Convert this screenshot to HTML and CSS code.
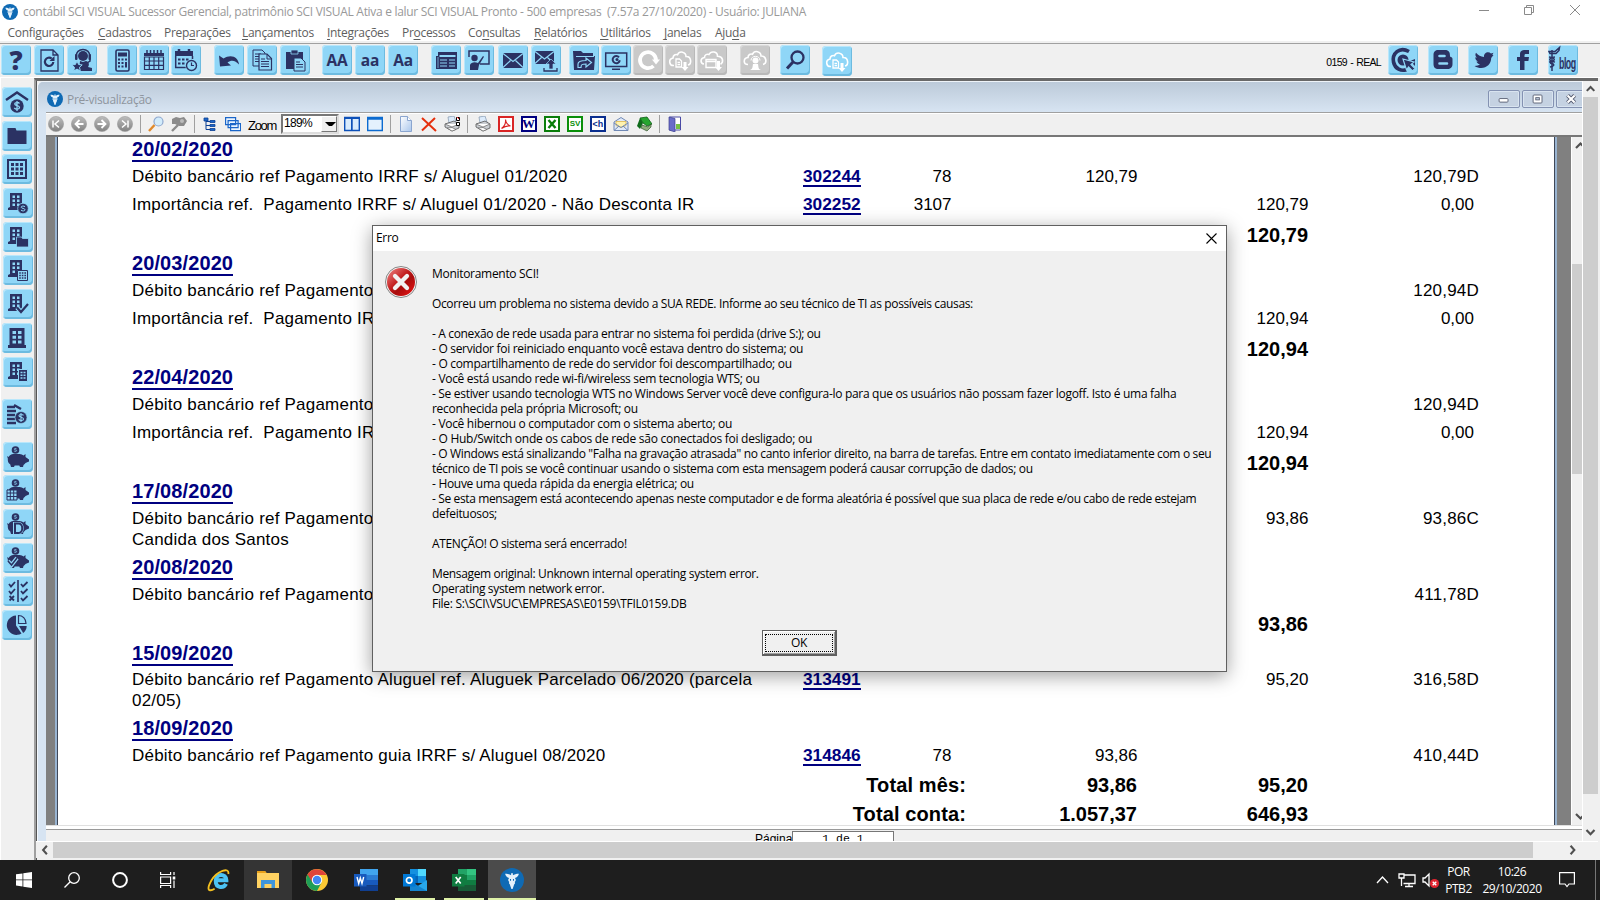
FILE: index.html
```html
<!DOCTYPE html>
<html lang="pt-BR">
<head>
<meta charset="utf-8">
<title>contábil SCI VISUAL Sucessor</title>
<link rel="stylesheet" href="styles.css">
</head>
<body>
<svg class="defs" aria-hidden="true">
<defs>
<linearGradient id="gBall" x1="0" y1="0" x2="0" y2="1"><stop offset="0" stop-color="#bdbdbd"/><stop offset="1" stop-color="#828282"/></linearGradient>
<linearGradient id="gRed" x1="0" y1="0" x2="1" y2="1"><stop offset="0" stop-color="#f08a8a"/><stop offset=".45" stop-color="#c11a1a"/><stop offset=".6" stop-color="#a80c0c"/><stop offset="1" stop-color="#f01515"/></linearGradient>
<linearGradient id="gPage" x1="0" y1="0" x2="1" y2="1"><stop offset="0" stop-color="#fff"/><stop offset="1" stop-color="#a9c6ec"/></linearGradient>
</defs>
<symbol id="logo" viewBox="0 0 16 16"><circle cx="8" cy="8" r="8" fill="#0f6ab4"/><path d="M3.400 3.800c1.800 0 3.200.4 4 1.100V3.500h1.200v1.400c.8-.7 2.200-1.100 4-1.100-.3 1.600-1.300 2.500-2.700 2.900.9.900.8 2-.1 2.600.4.600.2 1.200-.3 1.500L8.400 14h-.8l-1.100-3.200c-.5-.3-.7-.9-.3-1.500-.9-.6-1-1.700-.1-2.600-1.400-.4-2.400-1.300-2.700-2.900z" fill="#e4f1fb"/><path d="M7 7.300v1.200M9 7.300v1.200" stroke="#0f6ab4" stroke-width=".7"/></symbol>
<symbol id="doc" viewBox="0 0 30 30"><path d="M7 5h12l5 5v16H7zM19 5v5h5" fill="none" stroke="#2b3263" stroke-width="1.300"/><path d="M19.300 17a4.200 4.200 0 1 1-1.600-3.500" fill="none" stroke="#2b3263" stroke-width="2.200"/><path d="M20.500 11v5h-5z"/></symbol>
<symbol id="agent" viewBox="0 0 30 30"><circle cx="16" cy="11" r="5"/><path d="M9 12c-.5-10 14.500-10 14 0v4l-3 2" fill="none" stroke="#2b3263" stroke-width="1.500"/><rect x="21.500" y="9" width="2.500" height="6" rx="1"/><rect x="8" y="9" width="2.500" height="6" rx="1"/><path d="M13 16l3 1 3-1c4 1 3 5 2 6l4 1v3H12z"/><path d="M10 16l1.600 3.500 3.600.4-2.700 2.400.8 3.600-3.300-1.800-3.200 1.800.7-3.600L4.800 20l3.600-.5z" stroke="#8fd6f7"/></symbol>
<symbol id="calc" viewBox="0 0 30 30"><rect x="9" y="5" width="13" height="21" rx="1.500" fill="none" stroke="#2b3263" stroke-width="1.600"/><path d="M11 7.500h9v4h-9zM11 13.500h2v2h-2zM14.500 13.500h2v2h-2zM18 13.500h2v2h-2zM11 17h2v2h-2zM14.500 17h2v2h-2zM11 20.500h2v2h-2zM14.500 20.500h2v2h-2zM18 17h2v5.500h-2z"/></symbol>
<symbol id="cal" viewBox="0 0 30 30"><path d="M5 8h20v3H5z"/><path d="M8 5v4M11.500 5v4M15 5v4M18.500 5v4M22 5v4" stroke="#2b3263" stroke-width="1.500"/><path d="M5.500 12h19v12.500h-19zM5 16h20M5 20.300h20M10.300 12v13M15 12v13M19.700 12v13" fill="none" stroke="#2b3263" stroke-width="1.200"/></symbol>
<symbol id="calclock" viewBox="0 0 30 30"><path d="M4 6h18v5H4z"/><path d="M8 4v4M18 4v4" stroke="#2b3263" stroke-width="2.500"/><path d="M4.700 11v11.500h10M21.500 11v3" fill="none" stroke="#2b3263" stroke-width="1.500"/><path d="M7 13.500h2.500v2H7zM11 13.500h2.500v2H11zM15 13.500h2.500v2H15zM7 17.500h2.500v2H7zM11 17.500h2.500v2H11z"/><circle cx="20.500" cy="20.500" r="5" fill="#8fd6f7" stroke="#2b3263" stroke-width="1.400"/><path d="M20.500 17.500v3h2.500" fill="none" stroke="#2b3263" stroke-width="1.200"/></symbol>
<symbol id="undo" viewBox="0 0 30 30"><path d="M5 10.500l1 11 11-1-3.500-3c4-3 8-2 11.500 2-.5-7.500-8-11-15.500-6z"/></symbol>
<symbol id="copy" viewBox="0 0 30 30"><path d="M6 5h9l3 3v13H6z" fill="#8fd6f7" stroke="#2b3263"/><path d="M8 9h6M8 11.500h6M8 14h5M8 16.500h5" stroke="#2b3263"/><path d="M12 9h8l4.500 4.500V25H12z" fill="#8fd6f7" stroke="#2b3263" stroke-width="1.200"/><path d="M20 9v5h5M14 14h4M14 16.500h8M14 19h8M14 21.500h8" fill="none" stroke="#2b3263"/></symbol>
<symbol id="paste" viewBox="0 0 30 30"><path d="M6 7h17v17H6z"/><path d="M11 5h7v4h-7z" stroke="#8fd6f7" stroke-width=".8"/><path d="M14 13h7l4 4v9H14z" fill="#8fd6f7" stroke="#2b3263"/><path d="M16 17h4M16 19.500h7M16 22h7" stroke="#2b3263"/></symbol>
<symbol id="news" viewBox="0 0 30 30"><path d="M7 7h19v17H5V11h2z"/><path d="M8.500 11h16" stroke="#8fd6f7" stroke-width="2"/><path d="M9 15h7M9 18h7M9 21h7M18 15h6M18 21h6M18 18h6" stroke="#8fd6f7"/><path d="M7 12v11" stroke="#8fd6f7" stroke-width=".7"/></symbol>
<symbol id="teach" viewBox="0 0 30 30"><path d="M5 12V6h20v13h-9" fill="none" stroke="#2b3263" stroke-width="1.500"/><circle cx="10.500" cy="13" r="3.200"/><path d="M6 25v-5c1-3 5-3.500 8-2l5-7 1 .8-5 8.200-1 5z"/></symbol>
<symbol id="mail" viewBox="0 0 30 30"><path d="M5 8h20v15H5z"/><path d="M5 8.500l10 8 10-8M5 22.500l7.500-7M25 22.500l-7.500-7" fill="none" stroke="#8fd6f7" stroke-width="1.200"/></symbol>
<symbol id="mailup" viewBox="0 0 30 30"><path d="M4 6h19v13H4z"/><path d="M4 6.500l9.500 7.500 9.500-7.500M4 18.500l6.500-6M23 18.500l-6.500-6" fill="none" stroke="#8fd6f7" stroke-width="1.200"/><path d="M20 14l5 5h-3v5h-4v-5h-3z" stroke="#8fd6f7" stroke-width=".7"/><path d="M13 23v3h13v-3" fill="none" stroke="#2b3263" stroke-width="1.300"/></symbol>
<symbol id="share" viewBox="0 0 30 30"><path d="M4 6h8l2 2h10v3h2l-1 14H5z"/><path d="M7 11.500h18" stroke="#8fd6f7"/><path d="M9 22.500V19c0-2.500 2-3.500 8-3.500v-2.500l5.500 4.500L17 22v-3c-4 0-5 .5-5 3.500z" fill="none" stroke="#8fd6f7" stroke-width="1.200"/></symbol>
<symbol id="screen" viewBox="0 0 30 30"><path d="M4.700 8h21v13.500h-21z" fill="none" stroke="#2b3263" stroke-width="1.500"/><path d="M11 23.500h8v1.500h-8z"/><path d="M18 12.300a3.600 3.600 0 1 0 .8 3" fill="none" stroke="#2b3263" stroke-width="2"/><circle cx="16" cy="14.500" r="1.500"/></symbol>
<symbol id="refresh" viewBox="0 0 30 30"><path d="M20.500 21a8 8 0 1 1 2.500-6" fill="none" stroke="#fff" stroke-width="3.700"/><path d="M19 14.500h8l-4 5z" fill="#fff"/></symbol>
<symbol id="cloud" viewBox="0 0 30 30"><path d="M9 20.500c-5 .5-6-6.500-1-7.500 0-3 2.500-4 4.500-3.200 2-4.500 8.500-3 8.500 1.700 5.500-.3 6 7.500 2 8.500" fill="none" stroke="#fff" stroke-width="1.600"/><path d="M11 14h3.500l2 2v6H11zM12.500 17.500h2.500M12.500 19.700h2.500" fill="none" stroke="#fff" stroke-width="1.300"/><path d="M18.500 17h3v5h2l-3.500 4-3.500-4h2z" fill="#fff"/></symbol>
<symbol id="cloudcard" viewBox="0 0 30 30"><path d="M7 19c-4-.5-4-6 .5-6.500 0-3 2.500-3.700 4.500-3 2-4 8.500-3 8.500 1.700 5.500-.3 6.500 6 3 8" fill="none" stroke="#fff" stroke-width="1.600"/><path d="M9 14.500h10v8H9zM9 16.500h10" fill="none" stroke="#fff" stroke-width="1.400"/><path d="M20 16h3v6h2l-3.500 4-3.500-4h2z" fill="#fff"/></symbol>
<symbol id="clouduser" viewBox="0 0 30 30"><path d="M8 19.500c-5 0-5-6.500 0-7 0-3 2.500-4 4.500-3.200 2-4.500 8.500-3 8.500 1.700 5.500-.3 6.500 7.500 2 8.500" fill="none" stroke="#fff" stroke-width="1.600"/><circle cx="15.500" cy="15.500" r="3" fill="#fff"/><path d="M11 15.500c0-5.500 9-5.500 9 0" fill="none" stroke="#fff"/><path d="M10 25c3-1 2.500-4 3-6h5c.5 2 0 5 3 6z" fill="#fff"/></symbol>
<symbol id="find" viewBox="0 0 30 30"><circle cx="17.500" cy="12.500" r="6" fill="none" stroke="#2b3263" stroke-width="2.300"/><path d="M13 17l-6 6.500" stroke="#2b3263" stroke-width="3"/></symbol>
<symbol id="ctarget" viewBox="0 0 30 30"><path d="M21 6.500C11 1 4 9 5.500 17c1.500 7 8 9.500 13 7.500" fill="none" stroke="#2b3263" stroke-width="3.600"/><circle cx="15" cy="15" r="5.500"/><path d="M22 16l5-2v7z"/><path d="M15 14l11 3-3 2.500 4 4-2.500 2.500-4-4-2 3z" stroke="#8fd6f7" stroke-width="1.200"/></symbol>
<symbol id="blogger" viewBox="0 0 30 30"><path d="M10 5h7c4 0 5 2.500 5 6 0 1.500 2.500.5 2.500 3v5c0 3.500-2 5-5 5h-9c-3.500 0-5-2-5-5v-9c0-3.500 2-5 4.500-5z"/><path d="M11.500 11h5M11.500 18.500h7.500" stroke="#8fd6f7" stroke-width="2.600" stroke-linecap="round"/></symbol>
<symbol id="bird" viewBox="0 0 30 30"><path d="M25.500 10l-2.300 3c0 8-8.500 13-16.700 8 2.500 0 4.200-.5 5.500-1.700-2-.2-3-1.300-3.500-2.700h1.600c-2-1-2.800-2.300-2.800-4.300l1.600.5C7.200 11 7 9.500 8 7.800c2.300 2.500 4.700 4 8 4.200-.5-4.500 4.500-6 7-3.500l2.500-.8-1.200 2z"/></symbol>
<symbol id="fb" viewBox="0 0 30 30"><path d="M12 25V16H9v-4h3v-2.500C12 6 14 5 17 5h4v4h-3c-1.200 0-1.500.5-1.500 1.500V12H21l-.6 4h-3.900v9z"/></symbol>
<symbol id="staff" viewBox="0 0 30 30"><path d="M4 5v21" stroke="#2b3263" stroke-width="1.500"/><path d="M1 6.500h6l4.500-4L11 5.500 8 8.500H2zM1 12c7 1 7 4 0 5M7 12c-7 1-7 4 0 5M2 18c5 1 5 3 0 4" fill="none" stroke="#2b3263" stroke-width="1.500"/></symbol>
<symbol id="roof" viewBox="0 0 30 30"><path d="M4 13L15 5.500 26 13" fill="none" stroke="#2b3263" stroke-width="2.400"/><circle cx="15" cy="19" r="6.700"/><path d="M17.500 16.500c-1-1.500-5-1.300-4.700.6.300 2 4.700 1.200 4.700 3.400 0 2-4 2.200-5.200.4M15 14v10" fill="none" stroke="#8fd6f7" stroke-width="1.300"/></symbol>
<symbol id="folder" viewBox="0 0 30 30"><path d="M5.500 7l8 0 1 2.500h10V23h-19z"/></symbol>
<symbol id="gridi" viewBox="0 0 30 30"><rect x="6" y="6" width="18" height="18" fill="none" stroke="#2b3263" stroke-width="2"/><path d="M9 9h3v3H9zM13.500 9h3v3h-3zM18 9h3v3h-3zM9 13.500h3v3H9zM13.500 13.500h3v3h-3zM18 13.500h3v3h-3zM9 18h3v3H9zM13.500 18h3v3h-3zM18 18h3v3h-3z"/></symbol>
<symbol id="bld" viewBox="0 0 30 30"><path d="M7 5h12v14h3v3H5v-2l2-1z"/><path d="M9.500 7.500h2.500v2.500H9.500zM14 7.500h2.500v2.500H14zM9.500 11.500h2.500V14H9.500zM14 11.500h2.500V14H14zM9.500 15.500h2.500V18H9.500zM14 15.500h2.500V18H14z" fill="#8fd6f7"/></symbol>
<symbol id="bldcoin" viewBox="0 0 30 30"><use href="#bld"/><circle cx="20" cy="20.500" r="5.300" stroke="#8fd6f7" stroke-width=".8"/><path d="M22 18.700c-1-1-4-.8-3.800.6.200 1.300 3.800.8 3.800 2.500 0 1.400-3 1.500-4 .3" fill="none" stroke="#8fd6f7"/></symbol>
<symbol id="bldfolder" viewBox="0 0 30 30"><use href="#bld"/><path d="M13.500 15h5l1 1.500h6V25h-12z" stroke="#8fd6f7" stroke-width=".8"/></symbol>
<symbol id="bldgrid" viewBox="0 0 30 30"><use href="#bld"/><path d="M14.500 15.500h10v10h-10z" fill="#8fd6f7" stroke="#2b3263"/><path d="M16.200 18h7M16.200 20.500h7M16.200 23h7" stroke="#2b3263" stroke-width="1.300" stroke-dasharray="1.600 1"/></symbol>
<symbol id="bldcheck" viewBox="0 0 30 30"><use href="#bld"/><path d="M14 18.500l4 4.500 7-8" fill="none" stroke="#8fd6f7" stroke-width="4.500"/><path d="M14 18.500l4 4.500 7-8" fill="none" stroke="#2b3263" stroke-width="2.200"/></symbol>
<symbol id="bldbig" viewBox="0 0 30 30"><path d="M7.500 5h15v17H24v3H6v-3h1.500z"/><path d="M10.500 8h3.500v3h-3.500zM16 8h3.500v3H16zM10.500 12.800h3.500v3h-3.500zM16 12.800h3.500v3H16zM10.500 17.500h3.500v3h-3.500zM16 17.500h3.500v3H16z" fill="#8fd6f7"/></symbol>
<symbol id="bldtwo" viewBox="0 0 30 30"><use href="#bld"/><path d="M15.500 12.500h9v12h-9z" stroke="#8fd6f7"/><path d="M17.500 15.500h6M17.500 18.300h6M17.500 21h6" stroke="#8fd6f7" stroke-width="1.400" stroke-dasharray="2 1"/></symbol>
<symbol id="coins" viewBox="0 0 30 30"><path d="M5 8h8M5 12h9M5 16h8M5 20h8M5 24h9M12 6l7 4" stroke="#2b3263" stroke-width="2.400"/><circle cx="19" cy="18.500" r="6" stroke="#8fd6f7" stroke-width=".6"/><path d="M21.500 16.300c-1-1.300-4.700-1-4.500.6.300 1.800 4.500 1 4.500 3.100 0 1.800-3.700 2-4.800.4M19 14v9" fill="none" stroke="#8fd6f7" stroke-width="1.100"/></symbol>
<symbol id="pig" viewBox="0 0 30 30"><circle cx="12.500" cy="8" r="3.800"/><path d="M13.500 6.800c-.8-.6-2.400-.4-2.200.4.200.8 2.300.6 2.300 1.500 0 .8-1.700.9-2.400.3" fill="none" stroke="#8fd6f7" stroke-width=".8"/><path d="M4 14l1.500 1C7 12.500 9 12 12 12h4.500c1.800.2 3 .7 4 1.500l2-1.500v3l3.500 2.500v2l-3.500 1.500c-.8 1-1 1.300-2 2l-.5 2h-3l-.7-1.500h-4.600L11 25H8l-.7-2.500C5 21 4.700 19 4.800 16.500z"/></symbol>
<symbol id="piggrid" viewBox="0 0 30 30"><use href="#pig"/><path d="M4 15h10v10H4z" fill="#8fd6f7" stroke="#2b3263"/><path d="M4 18h10M4 21.500h10M7.300 15v10M10.700 15v10" stroke="#2b3263"/></symbol>
<symbol id="pigd" viewBox="0 0 30 30"><use href="#pig"/><path d="M11.500 14.500h4c5 0 5 9.500 0 9.500h-4z" fill="#8fd6f7" stroke="#8fd6f7" stroke-width="3"/><path d="M12 14.500h3.500c5 0 5 9.500 0 9.500H12z" fill="none" stroke="#2b3263" stroke-width="2"/></symbol>
<symbol id="pigcheck" viewBox="0 0 30 30"><use href="#pig"/><path d="M5 18l3.500 4L14 15" fill="none" stroke="#8fd6f7" stroke-width="4"/><path d="M5 18l3.500 4L14 15" fill="none" stroke="#2b3263" stroke-width="1.500"/></symbol>
<symbol id="checks" viewBox="0 0 30 30"><path d="M15 4v22" stroke="#2b3263" stroke-width="1.600"/><path d="M6 8l2 2.500L12 6M6 15l2 2.500 4-4.500M18 8l2 2.500L24.500 6M18 15l2 2.500 4.500-4.500M18 22l2 2.500 4.500-4.500M6.500 20l4.500 4.500M11 20l-4.500 4.500" fill="none" stroke="#2b3263" stroke-width="1.800"/></symbol>
<symbol id="pie" viewBox="0 0 30 30"><path d="M14 5.500v10l5.500 8A9.700 9.700 0 1 1 14 5.500z"/><path d="M16.500 5.500v8h7.500c0-5-3.500-8-7.500-8z" fill="none" stroke="#2b3263" stroke-width="1.200"/><path d="M17 16h7.700c0 3-1.500 5.500-3.500 7z"/></symbol>
<symbol id="ball" viewBox="0 0 16 16"><circle cx="8" cy="8" r="7.600" fill="url(#gBall)" stroke="#9d9d9d" stroke-width=".6"/></symbol>
<symbol id="printer" viewBox="0 0 16 16"><path d="M4 1l6-1 2 6-7 1z" fill="#dcebfb" stroke="#7f95ad" stroke-width=".7"/><path d="M1 8l9-3 5 3v4l-7 3-7-4z" fill="#c9cdd2" stroke="#555" stroke-width=".8"/><path d="M1 8l7 3 7-3M3 12l5 3 4-1.500-4-2z" fill="#fff" stroke="#666" stroke-width=".7"/></symbol>
</svg>

<div class="app">
  <header class="titlebar">
    <svg class="logo16"><use href="#logo"/></svg>
    <span class="titletext">contábil SCI VISUAL Sucessor Gerencial, patrimônio SCI VISUAL Ativa e lalur SCI VISUAL Pronto - 500 empresas&nbsp; (7.57a 27/10/2020) - Usuário: JULIANA</span>
    <svg class="winbtns" viewBox="0 0 104 16" fill="none" stroke="#8a8a8a"><path d="M1 8.500h10"/><path d="M46.500 5.500h7v7h-7zM48.500 5.500v-2h7v7h-2"/><path d="M92 3l10 10M102 3L92 13"/></svg>
  </header>
  <nav class="menu">
    <span style="width:76.500px">Confi<u>g</u>urações</span><span style="width:52px"><u>C</u>adastros</span><span style="width:64px">Prep<u>a</u>rações</span><span style="width:71px"><u>L</u>ançamentos</span><span style="width:61px"><u>I</u>ntegrações</span><span style="width:52px">Pr<u>o</u>cessos</span><span style="width:52px">Co<u>n</u>sultas</span><span style="width:52px"><u>R</u>elatórios</span><span style="width:50px"><u>U</u>tilitários</span><span style="width:37px"><u>J</u>anelas</span><span style="width:31px">Aju<u>d</u>a</span>
  </nav>
  <div class="toolbar">
    <div class="grp g1"><b class="b q">?</b><svg class="b"><use href="#doc"/></svg><svg class="b"><use href="#agent"/></svg></div>
    <div class="grp g2"><svg class="b"><use href="#calc"/></svg><svg class="b"><use href="#cal"/></svg><svg class="b"><use href="#calclock"/></svg></div>
    <div class="grp g3"><svg class="b"><use href="#undo"/></svg><svg class="b"><use href="#copy"/></svg><svg class="b"><use href="#paste"/></svg></div>
    <div class="grp g4"><b class="b">AA</b><b class="b">aa</b><b class="b">Aa</b></div>
    <div class="grp g5"><svg class="b"><use href="#news"/></svg><svg class="b"><use href="#teach"/></svg><svg class="b"><use href="#mail"/></svg><svg class="b"><use href="#mailup"/></svg></div>
    <div class="grp g6"><svg class="b"><use href="#share"/></svg><svg class="b"><use href="#screen"/></svg><svg class="b off"><use href="#refresh"/></svg><svg class="b off"><use href="#cloud"/></svg><svg class="b off"><use href="#cloudcard"/></svg></div>
    <div class="grp g7"><svg class="b off"><use href="#clouduser"/></svg></div>
    <div class="grp g8"><svg class="b"><use href="#find"/></svg></div>
    <div class="grp g9"><svg class="b"><use href="#cloud"/></svg></div>
    <span class="company">0159 - REAL</span>
    <div class="grp social"><svg class="b"><use href="#ctarget"/></svg><svg class="b"><use href="#blogger"/></svg><svg class="b"><use href="#bird"/></svg><svg class="b"><use href="#fb"/></svg><span class="b blog"><svg><use href="#staff"/></svg><i>blog</i></span></div>
  </div>
  <div class="main">
    <aside class="side">
      <div class="sg"><svg class="b"><use href="#roof"/></svg><svg class="b"><use href="#folder"/></svg><svg class="b"><use href="#gridi"/></svg><svg class="b in"><use href="#bldcoin"/></svg><svg class="b in"><use href="#bldfolder"/></svg><svg class="b in"><use href="#bldgrid"/></svg><svg class="b in"><use href="#bldcheck"/></svg><svg class="b"><use href="#bldbig"/></svg><svg class="b in"><use href="#bldtwo"/></svg></div>
      <div class="sg"><svg class="b"><use href="#coins"/></svg></div>
      <div class="sg"><svg class="b in"><use href="#pig"/></svg><svg class="b in"><use href="#piggrid"/></svg><svg class="b in"><use href="#pigd"/></svg><svg class="b in"><use href="#pigcheck"/></svg><svg class="b in"><use href="#checks"/></svg><svg class="b"><use href="#pie"/></svg></div>
    </aside>
    <div class="mdi">
      <div class="mdirow">
        <section class="child">
          <div class="childtitle">
            <svg class="logo16"><use href="#logo"/></svg><span>Pré-visualização</span>
            <div class="cb"><svg viewBox="0 0 32 18"><rect x="10.500" y="8.500" width="10" height="4" rx="1" fill="#fff" stroke="#555b70"/></svg><svg viewBox="0 0 32 18"><rect x="10.500" y="4.500" width="10" height="9" rx="1" fill="#fff" stroke="#555b70"/><rect x="13.500" y="7.500" width="4" height="2.500" fill="#c5d2e2" stroke="#555b70"/></svg><svg viewBox="0 0 32 18"><path d="M11 5l8 8M19 5l-8 8" stroke="#555b70" stroke-width="4.500"/><path d="M11 5l8 8M19 5l-8 8" stroke="#fff" stroke-width="2.400"/></svg></div>
          </div>
          <div class="pbar">
            <svg viewBox="0 0 16 16"><use href="#ball"/><path d="M5 4.500v7M11 4.500L7 8l4 3.500" stroke="#fff" stroke-width="1.500" fill="none"/></svg>
            <svg viewBox="0 0 16 16"><use href="#ball"/><path d="M8.500 4L4.500 8l4 4M5 8h7.500" stroke="#fff" stroke-width="1.800" fill="none"/></svg>
            <svg viewBox="0 0 16 16"><use href="#ball"/><path d="M7.500 4l4 4-4 4M11 8H3.500" stroke="#fff" stroke-width="1.800" fill="none"/></svg>
            <svg viewBox="0 0 16 16"><use href="#ball"/><path d="M11 4.500v7M5 4.500L9 8l-4 3.500" stroke="#fff" stroke-width="1.500" fill="none"/></svg>
            <hr>
            <svg viewBox="0 0 16 16"><path d="M1 15l5.500-6" stroke="#e08a2c" stroke-width="2.400"/><circle cx="10.500" cy="5.500" r="4.500" fill="#d3ecfb" stroke="#8fa8cf" stroke-width="1.200"/></svg>
            <svg viewBox="0 0 16 16"><path d="M1 15l6-6" stroke="#8b8b8b" stroke-width="2.400"/><path d="M1 3l4-2 4 1 4-1 3 4-3 5-5 0-4-2-3 0z" fill="#8b8b8b"/><circle cx="11" cy="5" r="2" fill="#bbb"/></svg>
            <hr>
            <svg viewBox="0 0 16 16"><path d="M2 2h4v3H2zM8 4.500h5v2H8zM8 8.500h5v2H8zM8 12.500h5v2H8z" fill="#1b66c9" stroke="#0b3f93" stroke-width=".8"/><path d="M4 5v8.500h4M4 5.500h4M4 9.500h4" fill="none" stroke="#0b3f93"/></svg>
            <svg viewBox="0 0 16 16"><path d="M.6 1.600h10v7h-10zM3.100 4.600h10v7h-10zM5.600 7.600h10v7h-10z" fill="#eaf5ff" stroke="#1b66c9" stroke-width="1.200"/></svg>
            <label class="zl">Zoom</label><span class="combo">189%<i></i></span>
            <svg viewBox="0 0 16 16"><path d="M.7 1.500h7v13h-7zM8 1.500h7.300v13H8z" fill="#d9ebfc" stroke="#0d50b8" stroke-width="1.400"/><path d="M0 2h16" stroke="#0d50b8" stroke-width="2"/></svg>
            <svg viewBox="0 0 16 16"><path d="M.7 1.500h14.600v13H.7z" fill="#e4f1fd" stroke="#0d6bd0" stroke-width="1.400"/><path d="M0 2.500h16" stroke="#0d6bd0" stroke-width="2.500"/></svg>
            <hr>
            <svg viewBox="0 0 16 16"><path d="M2.500.5h7l4 4v11h-11z" fill="url(#gPage)" stroke="#8aa5cf"/><path d="M9.500.5v4h4" fill="#fff" stroke="#8aa5cf"/></svg>
            <svg viewBox="0 0 16 16"><path d="M1 2l14 13M14 2L1 14.500" stroke="#e5300d" stroke-width="2"/></svg>
            <svg viewBox="0 0 16 16"><use href="#printer"/><path d="M12.500 1.500h3v3h-3zM12.500 6.500h3v3h-3z" fill="#fff" stroke="#000"/><path d="M13 1l2 2" stroke="#e22"/></svg>
            <hr>
            <svg viewBox="0 0 16 16"><use href="#printer"/></svg>
            <svg viewBox="0 0 16 16"><path d="M1 1h14v14H1z" fill="#fff" stroke="#d92525" stroke-width="2"/><path d="M3.500 12.500C7 10 8 7 7.500 3.500c.5 4 2 5.500 5 6.500-3-.5-6 .3-9 2.500z" fill="none" stroke="#d92525" stroke-width="1.200"/></svg>
            <span class="tile w">W</span>
            <svg viewBox="0 0 16 16"><path d="M1 1h14v14H1z" fill="#fff" stroke="#0a7d0a" stroke-width="2"/><path d="M4.500 4l7 8M11.500 4l-7 8" stroke="#0a7d0a" stroke-width="2.400"/></svg>
            <span class="tile sv">SV</span><span class="tile h">&lt;h</span>
            <svg viewBox="0 0 16 16"><path d="M1 6l7-4.500L15 6v8.500H1z" fill="#dfe9fa" stroke="#7089b5"/><path d="M3 5.500h10v4l-5 2-5-2z" fill="#fff3b0" stroke="#e0b84a" stroke-width=".8"/><path d="M1 14.500L6 10M15 14.500L10 10M1 7l7 4.500L15 7" fill="none" stroke="#7089b5"/></svg>
            <svg viewBox="0 0 16 16"><path d="M4 2l7-1 5 7-5 2-4-3z" fill="#27a52f" stroke="#0d5e16" stroke-width=".8"/><path d="M4 2l-3 8 3 3 3-6z" fill="#0f6b1a"/><path d="M6 9l6 2 3-3v3l-4 4-6-3z" fill="#8fae7c" stroke="#1f451a" stroke-width=".6"/></svg>
            <hr>
            <svg viewBox="0 0 16 16"><path d="M2.500 1h11v13h-11z" fill="#fff" stroke="#4a4aa5"/><path d="M9 8h4v5H9z" fill="#76c043"/><path d="M2 1l6 1.500V16l-6-2z" fill="#6a6cc8" stroke="#3e4090" stroke-width=".7"/></svg>
          </div>
          <div class="preview">
            <div class="gut gl"></div>
            <div class="page">
              <div class="d"><a>20/02/2020</a></div>
              <div class="r"><p>Débito bancário ref Pagamento IRRF s/ Aluguel 01/2020</p><a>302244</a><span>78</span><span>120,79</span><span></span><span class="bal">120,79D</span></div>
              <div class="r"><p>Importância ref.&nbsp; Pagamento IRRF s/ Aluguel 01/2020 - Não Desconta IR</p><a>302252</a><span>3107</span><span></span><span>120,79</span><span class="z">0,00</span></div>
              <div class="t m2"><span></span><span></span><span>120,79</span></div>
              <div class="d"><a>20/03/2020</a></div>
              <div class="r"><p>Débito bancário ref Pagamento</p><a></a><span></span><span></span><span></span><span class="bal">120,94D</span></div>
              <div class="r"><p>Importância ref.&nbsp; Pagamento IR</p><a></a><span></span><span></span><span>120,94</span><span class="z">0,00</span></div>
              <div class="t m2"><span></span><span></span><span>120,94</span></div>
              <div class="d"><a>22/04/2020</a></div>
              <div class="r"><p>Débito bancário ref Pagamento</p><a></a><span></span><span></span><span></span><span class="bal">120,94D</span></div>
              <div class="r"><p>Importância ref.&nbsp; Pagamento IR</p><a></a><span></span><span></span><span>120,94</span><span class="z">0,00</span></div>
              <div class="t m2"><span></span><span></span><span>120,94</span></div>
              <div class="d"><a>17/08/2020</a></div>
              <div class="r two"><p>Débito bancário ref Pagamento<br>Candida dos Santos</p><a></a><span></span><span></span><span>93,86</span><span class="bal">93,86C</span></div>
              <div class="d"><a>20/08/2020</a></div>
              <div class="r"><p>Débito bancário ref Pagamento</p><a></a><span></span><span></span><span></span><span class="bal">411,78D</span></div>
              <div class="t m1"><span></span><span></span><span>93,86</span></div>
              <div class="d m1"><a>15/09/2020</a></div>
              <div class="r two short"><p>Débito bancário ref Pagamento Aluguel ref. Aluguek Parcelado 06/2020 (parcela<br>02/05)</p><a>313491</a><span></span><span></span><span>95,20</span><span class="bal">316,58D</span></div>
              <div class="d"><a>18/09/2020</a></div>
              <div class="r"><p>Débito bancário ref Pagamento guia IRRF s/ Aluguel 08/2020</p><a>314846</a><span>78</span><span>93,86</span><span></span><span class="bal">410,44D</span></div>
              <div class="t m1"><span>Total mês:</span><span>93,86</span><span>95,20</span></div>
              <div class="t m1"><span>Total conta:</span><span>1.057,37</span><span>646,93</span></div>
            </div>
            <div class="gut gr"></div>
            <div class="vs inner"><svg viewBox="0 0 17 17"><path d="M4 11l4.500-4.500L13 11" fill="none" stroke="#505050" stroke-width="2.200"/></svg><div class="thumb"></div><svg viewBox="0 0 17 17"><path d="M4 6l4.500 4.500L13 6" fill="none" stroke="#505050" stroke-width="2.200"/></svg></div>
          </div>
          <div class="status"><span class="pg">Página</span><span class="pn">1 de 1</span></div>
        </section>
        <div class="vs outer"><svg viewBox="0 0 17 17"><path d="M3.500 10.500l4-4.200 4 4.200" fill="none" stroke="#505050" stroke-width="2.200"/></svg><div class="thumb"></div><svg viewBox="0 0 17 17"><path d="M3.500 6l4 4.200 4-4.200" fill="none" stroke="#505050" stroke-width="2.200"/></svg></div>
      </div>
      <div class="hs"><svg viewBox="0 0 17 17"><path d="M10.500 4L6.500 8.500l4 4.500" fill="none" stroke="#505050" stroke-width="2.200"/></svg><div class="thumb"></div><svg viewBox="0 0 17 17"><path d="M7 4l4 4.500L7 13" fill="none" stroke="#505050" stroke-width="2.200"/></svg></div>
    </div>
  </div>
  <footer class="task">
    <div class="tk s"><svg viewBox="0 0 16 16" width="16" height="16" fill="#fff"><path d="M0 2.300L6.500 1.400v6.100H0zM7.300 1.300L16 0v7.500H7.300zM0 8.300h6.500v6.200L0 13.600zM7.300 8.300H16V16l-8.700-1.300z"/></svg></div>
    <div class="tk s"><svg viewBox="0 0 16 16" width="16" height="16" fill="none" stroke="#fff" stroke-width="1.300"><circle cx="10" cy="6" r="5.300"/><path d="M6.200 9.800L.5 15.500"/></svg></div>
    <div class="tk s"><svg viewBox="0 0 16 16" width="16" height="16"><circle cx="8" cy="8" r="6.900" fill="none" stroke="#fff" stroke-width="2"/></svg></div>
    <div class="tk s"><svg viewBox="0 0 16 16" width="16" height="16" fill="none" stroke="#fff" stroke-width="1.200"><path d="M.6 0v2.500h10V0M.6 5h10v6.500H.6zM.6 16v-2.500h10V16M14 0v3M14 8.500V16"/><path d="M14 4.500v3" stroke-width="2.600"/></svg></div>
    <div class="tk ie"><svg viewBox="0 0 22 22" width="24" height="24"><path d="M17.500 14.500c-2 4-9.500 4.500-9.500-2.500 0-7.500 9.800-7 9.800-.8H8.500" fill="none" stroke="#4cc3f4" stroke-width="3.600"/><path d="M19.500 5.500C21-1.500 9 3 4 11.500c-4.500 8-3 11 3 7.500" fill="none" stroke="#f4c020" stroke-width="1.700"/></svg></div>
    <div class="tk s ex"><svg viewBox="0 0 22 20" width="22" height="20"><path d="M0 1h8l1.500 2H22v15H0z" fill="#ffd262"/><path d="M0 1h8l1.500 2H0z" fill="#e9a11b"/><path d="M4 18v-8h14v8h-3.500v-4h-7v4z" fill="#3e95dc"/></svg></div>
    <div class="tk"><svg viewBox="0 0 22 22" width="22" height="22"><circle cx="11" cy="11" r="11" fill="#fcc934"/><path d="M11 11L1.500 5.500A11 11 0 0 0 11 22l4.500-8.500z" fill="#1e9e57"/><path d="M1.500 5.500A11 11 0 0 1 20.600 6H11l-4.500 7.500z" fill="#e0443a"/><circle cx="11" cy="11" r="5.200" fill="#fff"/><circle cx="11" cy="11" r="4.200" fill="#4286f5"/></svg></div>
    <div class="tk"><svg viewBox="0 0 24 22" width="24" height="22"><path d="M6 0h18v6H6z" fill="#41a5ee"/><path d="M6 6h18v5H6z" fill="#2b7cd3"/><path d="M6 11h18v5.500H6z" fill="#185abd"/><path d="M6 16.500h18V22H6z" fill="#103f91"/><path d="M0 5h12.500v12.500H0z" fill="#185abd"/><path d="M3 8l1.700 6.500L6.300 9l1.700 5.500L9.700 8" fill="none" stroke="#fff" stroke-width="1.400"/></svg></div>
    <div class="tk un"><svg viewBox="0 0 24 22" width="24" height="22"><path d="M7 0h16v14H7z" fill="#1490df"/><path d="M15 0h8v7h-8z" fill="#50d9ff"/><path d="M7 7h8v7H7z" fill="#0364b8"/><path d="M7 22l17-11v11z" fill="#28a8ea"/><path d="M7 12l17 10H7z" fill="#1484cf"/><path d="M0 5h12.500v12.500H0z" fill="#0078d4"/><circle cx="6.200" cy="11.300" r="2.800" fill="none" stroke="#fff" stroke-width="1.700"/></svg></div>
    <div class="tk un"><svg viewBox="0 0 24 22" width="24" height="22"><path d="M6 0h9v6H6z" fill="#21a366"/><path d="M15 0h9v6h-9z" fill="#33c481"/><path d="M6 6h9v10H6z" fill="#107c41"/><path d="M15 6h9v5h-9z" fill="#21a366"/><path d="M15 11h9v5h-9z" fill="#107c41"/><path d="M6 16h18v6H6z" fill="#185c37"/><path d="M0 5h12.500v12.500H0z" fill="#107c41"/><path d="M3.700 8l5 6.500M8.700 8l-5 6.500" stroke="#fff" stroke-width="1.700"/></svg></div>
    <div class="tk act"><svg width="24" height="24"><use href="#logo"/></svg></div>
    <div class="tray">
      <svg viewBox="0 0 64 20" width="64" height="20" fill="none" stroke="#fff" stroke-width="1.300"><path d="M1 13l5.500-6 5.500 6"/><path d="M28 5h11v8.500H27.500M23 4h5v4h-5zM25.500 8v8M29 16.500h8M33 13.500v3"/><path d="M47 8h2l4-4v12l-4-4h-2z"/><circle cx="58.500" cy="13.500" r="4.600" fill="#e0242f" stroke="none"/><path d="M56.700 11.700l3.600 3.600M60.300 11.700l-3.600 3.600"/></svg>
      <div class="two-l lang"><span>POR</span><span>PTB2</span></div>
      <div class="two-l clock"><span>10:26</span><span>29/10/2020</span></div>
      <svg viewBox="0 0 16 16" width="16" height="16" fill="none" stroke="#fff" stroke-width="1.200"><path d="M.6.600h14.800v11.400H10L8 14.500 6 12H.6z"/></svg>
      <i class="peek"></i>
    </div>
  </footer>
</div>

<div class="dialog">
  <div class="dt"><span>Erro</span><svg viewBox="0 0 11 11"><path d="M.5.500l10 10M10.500.5l-10 10" stroke="#000" stroke-width="1.100"/></svg></div>
  <div class="db">
    <svg class="err" viewBox="0 0 32 32"><circle cx="16" cy="16" r="15.500" fill="#f4f4f4" stroke="#858585"/><circle cx="16" cy="16" r="14" fill="url(#gRed)"/><path d="M10 10l12 12M22 10L10 22" stroke="#f2f2f2" stroke-width="4.300" stroke-linecap="round"/></svg>
    <div class="msg">Monitoramento SCI!

<span class="k2">Ocorreu um problema no sistema devido a SUA REDE. Informe ao seu técnico de TI as possíveis causas:</span>

<span class="k1">- A conexão de rede usada para entrar no sistema foi perdida (drive S:); ou</span>
- O servidor foi reiniciado enquanto você estava dentro do sistema; ou
- O compartilhamento de rede do servidor foi descompartilhado; ou
- Você está usando rede wi-fi/wireless sem tecnologia WTS; ou
<span class="k0">- Se estiver usando tecnologia WTS no Windows Server você deve configura-lo para que os usuários não possam fazer logoff. Isto é uma falha</span>
reconhecida pela própria Microsoft; ou
- Você hibernou o computador com o sistema aberto; ou
<span class="kw">- O Hub/Switch onde os cabos de rede são conectados foi desligado; ou</span>
<span class="k1">- O Windows está sinalizando "Falha na gravação atrasada" no canto inferior direito, na barra de tarefas. Entre em contato imediatamente com o seu</span>
<span class="k1">técnico de TI pois se você continuar usando o sistema com esta mensagem poderá causar corrupção de dados; ou</span>
- Houve uma queda rápida da energia elétrica; ou
<span class="k3">- Se esta mensagem está acontecendo apenas neste computador e de forma aleatória é possível que sua placa de rede e/ou cabo de rede estejam</span>
defeituosos;

<span class="k3">ATENÇÃO! O sistema será encerrado!</span>

<span class="k2">Mensagem original: Unknown internal operating system error.</span>
<span class="k1">Operating system network error.</span>
File: S:\SCI\VSUC\EMPRESAS\E0159\TFIL0159.DB</div>
  </div>
  <button class="ok"><span>OK</span></button>
</div>
</body>
</html>
```
FILE: styles.css
```css
* { box-sizing: border-box; }
body { margin: 0; width: 1600px; height: 900px; overflow: hidden; position: relative; background: #fff; font-family: "Open Sans", "Noto Sans", sans-serif; }
.defs { position: absolute; width: 0; height: 0; }
svg { display: block; flex: none; }
p { margin: 0; }
.app { display: flex; flex-direction: column; width: 1600px; height: 900px; }
.titlebar { height: 23px; display: flex; align-items: center; padding-left: 2px; color: #999; font-size: 12px; }
.logo16 { width: 16px; height: 16px; }
.titletext { margin-left: 5px; width: 783px; white-space: nowrap; letter-spacing: -0.303px; }
.winbtns { width: 104px; height: 16px; margin-left: auto; margin-right: 18px; margin-top: -3px; }
.menu { height: 18px; padding-left: 7.500px; display: flex; gap: 14px; align-items: center; font-size: 12px; color: #5e5e5e; white-space: nowrap; letter-spacing: -0.3px; }
.menu span { flex: none; line-height: 18px; margin-top: 2px; }
.menu u { text-underline-offset: 2px; }
.toolbar { height: 37px; background: #f0f0f0; border-bottom: 1px solid #fff; display: flex; padding-top: 4px; position: relative; box-shadow: inset 0 2px #f0f0f0, inset 0 3px #a0a0a0; }
.b { width: 30px; height: 30px; flex: none; border-radius: 4px; background: #8fd6f7; box-shadow: inset 1px 1px #b9e7fb, inset -1px -2px #6dbbe0; fill: #2b3263; color: #2b3263; }
b.b { font-size: 15.500px; line-height: 30px; text-align: center; letter-spacing: -0.2px; }
b.q { font-size: 26px; line-height: 31px; font-weight: 800; }
.off { background: #c9c9c9; box-shadow: inset 1px 1px #d9d9d9, inset -1px -2px #b9b9b9; }
.grp { display: flex; gap: 3px; flex: none; }
.g1 { margin-left: 1px; }
.g2 { margin-left: 10px; gap: 2px; }
.g3 { margin-left: 13px; }
.g4 { margin-left: 12px; }
.g5 { margin-left: 13px; gap: 3.300px; }
.g6 { margin-left: 8px; gap: 2px; }
.g7 { margin-left: 13px; }
.g8 { margin-left: 10px; }
.g9 { margin: 1px 0 0 12px; }
.company { margin-left: auto; margin-right: 7px; font: 10.500px/35px "Liberation Sans", Arial, sans-serif; letter-spacing: -0.68px; color: #000; word-spacing: 1px; }
.social { gap: 10px; margin-right: 22px; }
.blog { display: flex; overflow: hidden; }
.blog svg { width: 30px; height: 30px; }
.blog i { margin-left: -19px; font: bold 17px/38px "Liberation Sans", Arial, sans-serif; letter-spacing: -1px; transform: scaleX(.52); transform-origin: 0 0; }
.main { height: 782px; display: flex; background: #f0f0f0; }
.side { width: 34px; padding: 9px 0 0 2px; box-shadow: inset 1px 0 #fff; }
.sg { display: flex; flex-direction: column; gap: 3.700px; margin-bottom: 12.500px; }
.sg .in { margin-left: 1px; }
.mdi { width: 1564px; border-left: 2px solid #a0a0a0; border-top: 3px solid #696969; box-shadow: inset 1px 0 #555; display: flex; flex-direction: column; }
.mdirow { display: flex; height: 760px; padding-left: 1px; }
.child { width: 1545px; flex: none; overflow: hidden; background: #d7e4f2; border-top: 1px solid #eef3f8; border-top-left-radius: 6px; border-left: 1px solid #f4f8fc; }
.childtitle { height: 30px; display: flex; align-items: center; padding-left: 9px; background: linear-gradient(#bccad9, #d7e4f2); font-size: 12px; letter-spacing: -0.3px; color: #8e959e; }
.childtitle .logo16 { margin-top: 3px; }
.childtitle span { margin: 4px 0 0 4px; }
.cb { display: flex; gap: 2px; margin-left: auto; margin-right: -6px; margin-top: 3px; }
.cb svg { width: 32px; height: 18px; border: 1px solid #8492b2; border-radius: 2px; box-shadow: inset 0 0 0 1px #d9e4f0; background: #c5d2e2; }
.pbar { height: 25px; margin-left: 8px; background: #f0f0f0; border-top: 1px solid #a0a0a0; box-shadow: inset 0 1px #fff; border-bottom: 2px solid #777; display: flex; align-items: center; gap: 7px; padding-left: 2px; }
.pbar svg { width: 16px; height: 16px; }
.pbar hr { width: 1px; height: 18px; margin: 0; border: 0; background: #a0a0a0; }
.zl { font: 13px "Liberation Sans", Arial, sans-serif; width: 33px; margin-right: -7px; padding-top: 3px; letter-spacing: -1.300px; }
.combo { width: 58px; height: 20px; background: #fff; border: 2px solid #777; border-right-color: #ddd; border-bottom-color: #ddd; font: 12px/14px "Liberation Sans", Arial, sans-serif; letter-spacing: -.7px; padding-left: 1px; display: flex; justify-content: space-between; margin-right: -2px; }
.combo i { width: 16px; background: #f0f0f0; border: 1px solid; border-color: #fff #777 #777 #fff; }
.combo i::after { content: ""; display: block; margin: 5px 0 0 3px; border: 4px solid transparent; border-top-color: #000; border-bottom: 0; }
.tile { width: 16px; height: 16px; background: #fff; border: 2px solid; font: bold 12px/12px "Liberation Sans", Arial, sans-serif; text-align: center; overflow: hidden; }
.tile.w { color: #000080; font-family: "Liberation Serif", serif; font-size: 13px; text-indent: -1px; }
.tile.sv { color: #0a8f0a; font-size: 8px; }
.tile.h { color: #0b2f8f; font-size: 9px; }
.preview { height: 688px; margin-left: 8px; display: flex; overflow: hidden; background: #808080; }
.gut { flex: none; background: #808080; }
.gl { width: 12px; border-right: 1px solid #404858; box-shadow: inset -2px 0 #99b4d1; }
.gr { width: 17px; border-left: 1px solid #404858; box-shadow: inset 2px 0 #99b4d1; }
.page { width: 1496px; flex: none; background: #fff; font: 17px "Liberation Sans", Arial, sans-serif; color: #000; padding-left: 74px; margin-top: -2px; }
.page a { font-weight: bold; color: #000080; }
.d { height: 28px; font-size: 20px; line-height: 28px; letter-spacing: .1px; }
.r a { justify-self: start; }
.d a { display: inline-block; line-height: 22px; margin-top: 3px; border-bottom: 2px solid #000080; vertical-align: top; }
.r { height: 28px; padding-top: 3px; line-height: 21px; display: grid; grid-template-columns: 671px 67px 81.500px 186px 171px 170.500px; white-space: nowrap; text-align: right; }
.r p { text-align: left; letter-spacing: .21px; }
.r a { height: 21px; line-height: 21px; font-size: 17.300px; }
.r a:not(:empty) { border-bottom: 2px solid #000080; }
.r .bal { letter-spacing: .2px; }
.r .z { padding-right: 5px; }
.two { height: 48px; }
.short { height: 47px; padding-top: 2px; }
.t { height: 28px; line-height: 28px; font-size: 20px; font-weight: bold; display: grid; grid-template-columns: 834px 171px 171px; text-align: right; }
.t span:first-child { letter-spacing: .12px; }
.m1 { margin-top: 1px; }
.m2 { margin-top: 2px; }
.vs { background: #f0f0f0; border-left: 1px solid #fff; display: flex; flex-direction: column; flex: none; }
.vs svg { width: 17px; height: 17px; }
.vs .thumb { background: #cdcdcd; }
.inner { width: 18px; }
.inner .thumb { margin-top: 110px; height: 210px; }
.inner svg:last-child, .outer svg:last-child { margin-top: auto; }
.outer { width: 16px; height: 760px; }
.outer .thumb { height: 697px; }
.outer svg:first-child { height: 16px; }
.status { height: 16px; margin-left: 8px; background: #f0f0f0; border-top: 1px solid #e0e0e0; box-shadow: inset 0 3px #fff, inset 0 4px #999; display: flex; padding: 5px 0 0 709px; font: 12px/15px "Liberation Sans", Arial, sans-serif; overflow: hidden; }
.pg { width: 37px; padding-top: 1px; }
.pn { width: 102px; height: 20px; border: 1px solid #777; background: #fff; text-align: center; font-family: "Liberation Mono", monospace; font-size: 11.500px; line-height: 14px; }
.hs { height: 17px; background: #f0f0f0; display: flex; align-items: center; border-top: 1px solid #fff; padding-left: 1px; }
.hs svg { width: 16px; height: 16px; }
.hs .thumb { width: 1480px; height: 16px; background: #cdcdcd; }
.hs svg:last-child { margin-left: 31px; }
.task { height: 40px; background: #1e1e1e; display: flex; color: #fff; }
.tk { width: 49px; display: flex; align-items: center; justify-content: center; flex: none; }
.tk.s { width: 48px; }
.tk.ie { width: 52px; padding-left: 2px; }
.tk.ex { background: #343434; padding-right: 1px; }
.un { background: linear-gradient(#dff2a8, #dff2a8) 50% 100% / 40px 2px no-repeat; }
.tk.act { width: 48px; background: linear-gradient(#dff2a8, #dff2a8) 0 100% / 100% 2px no-repeat #4b4b4b; }
.tray { margin-left: auto; display: flex; align-items: center; }
.two-l { display: flex; flex-direction: column; font-size: 12px; line-height: 17px; text-align: center; letter-spacing: -.45px; }
.lang { width: 39px; margin-left: -1px; margin-right: 2px; }
.clock { width: 62px; margin: 0 16px 0 1px; }
.peek { width: 1px; height: 40px; background: #777; margin: 0 4px 0 20px; }
.dialog { position: absolute; left: 372px; top: 225px; width: 855px; height: 447px; border: 1px solid #606060; background: #f0f0f0; box-shadow: 0 4px 18px rgba(0,0,0,.38); color: #000; font-size: 12px; }
.dt { height: 25px; background: #fff; display: flex; justify-content: space-between; align-items: center; padding: 0 9px 0 3px; letter-spacing: -.3px; }
.dt span { margin-top: -2px; }
.dt svg { width: 11px; height: 11px; margin-top: -1px; }
.db { display: flex; padding: 15px 0 0 12px; height: 378px; }
.err { width: 32px; height: 32px; }
.msg { margin-left: 15px; white-space: pre; line-height: 15px; letter-spacing: -.3px; }
.k0 { letter-spacing: -.312px; }
.k1 { letter-spacing: -.343px; }
.k2 { letter-spacing: -.357px; }
.k3 { letter-spacing: -.375px; }
.kw { letter-spacing: -.262px; }
.ok { display: block; margin: 1px 0 0 389px; width: 75px; height: 26px; padding: 2px; background: #f0f0f0; border: 1px solid #606060; border-right-width: 2px; border-bottom-width: 2px; box-shadow: inset 1px 1px #fff, inset -1px -1px #a0a0a0; font: 12px "Open Sans", sans-serif; letter-spacing: -.4px; }
.ok span { display: block; height: 18px; line-height: 16px; border: 1px dotted #000; }
```
